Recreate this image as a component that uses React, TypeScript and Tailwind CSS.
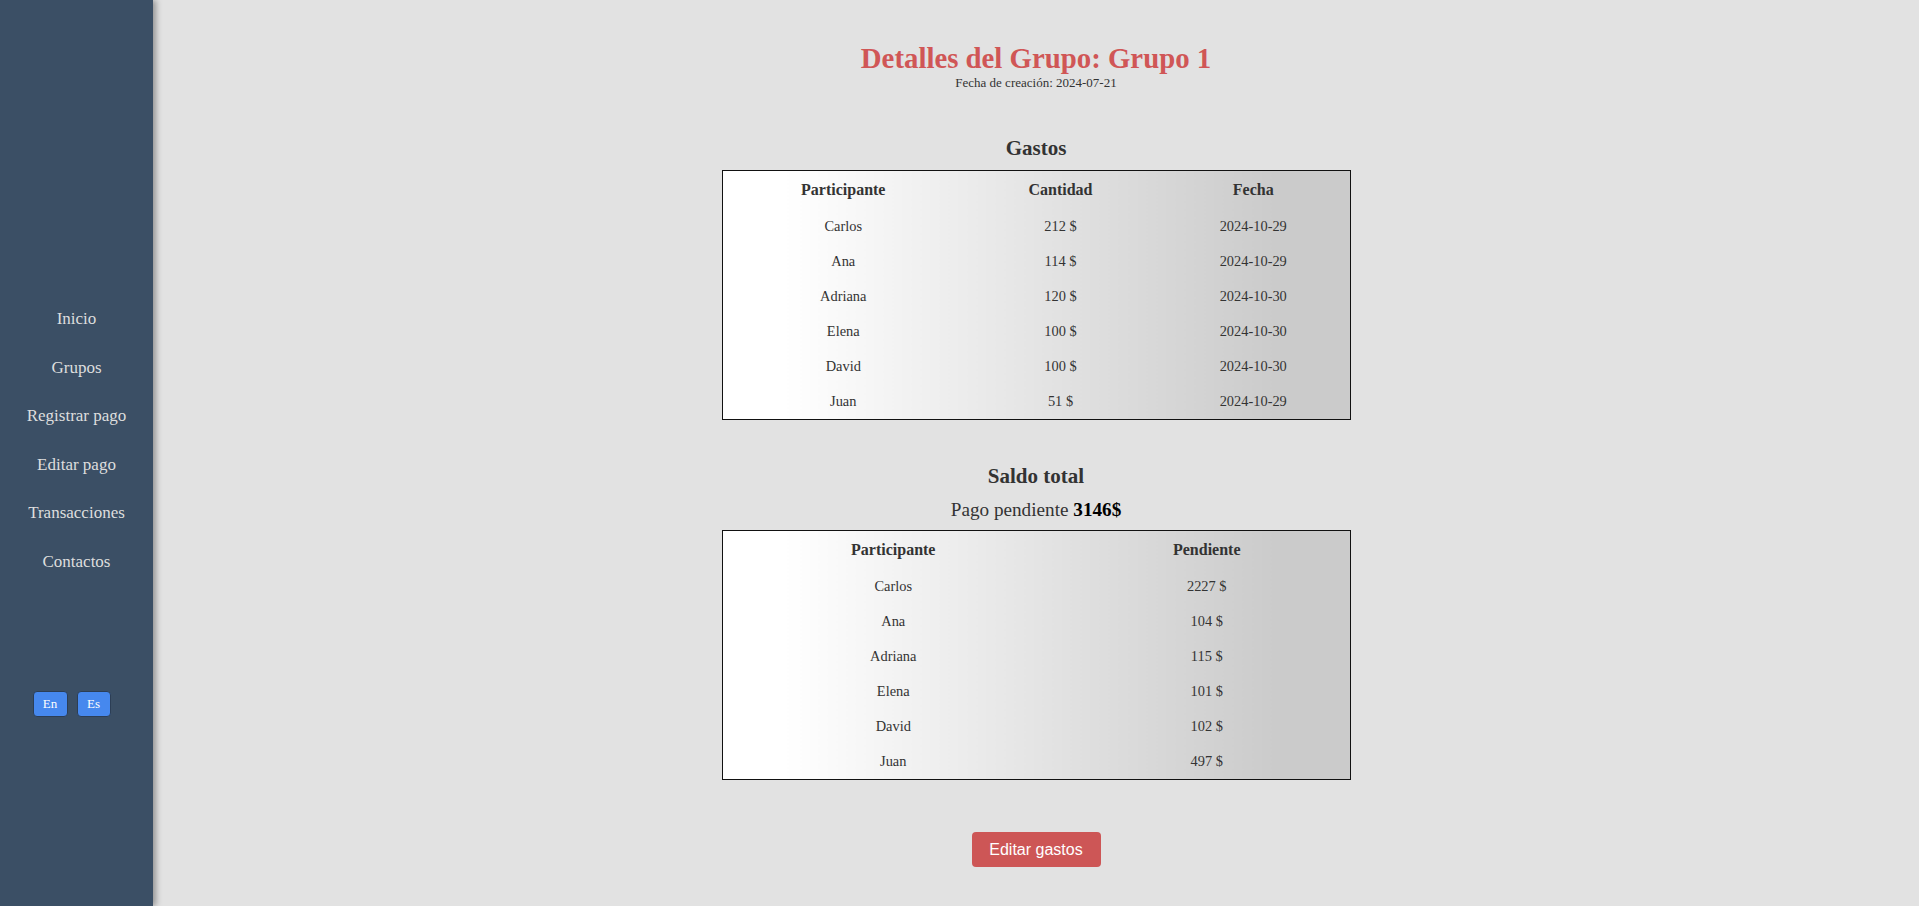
import React from "react";

const serif = { fontFamily: '"Liberation Serif", "Times New Roman", serif' };

const gastos = [
  ["Carlos", "212 $", "2024-10-29"],
  ["Ana", "114 $", "2024-10-29"],
  ["Adriana", "120 $", "2024-10-30"],
  ["Elena", "100 $", "2024-10-30"],
  ["David", "100 $", "2024-10-30"],
  ["Juan", "51 $", "2024-10-29"],
];

const saldos = [
  ["Carlos", "2227 $"],
  ["Ana", "104 $"],
  ["Adriana", "115 $"],
  ["Elena", "101 $"],
  ["David", "102 $"],
  ["Juan", "497 $"],
];

const nav = ["Inicio", "Grupos", "Registrar pago", "Editar pago", "Transacciones", "Contactos"];

export default function App() {
  return (
    <div className="flex h-[906px] w-full bg-[#e2e2e2] overflow-hidden" style={serif}>
      <aside className="relative z-10 w-[153px] shrink-0 h-full bg-[#3b4f65] shadow-[3px_0_6px_rgba(0,0,0,0.35)] flex flex-col items-center pt-[309px]">
        <nav className="flex flex-col items-center gap-[28.5px]">
          {nav.map((n) => (
            <a key={n} className="text-[17px] leading-[20px] text-[#dedede] cursor-pointer">
              {n}
            </a>
          ))}
        </nav>
        <div className="flex gap-[9px] mt-[119px] -ml-[10px]">
          <button className="w-[35px] h-[26px] rounded-[4px] bg-[#4688ee] border border-[#2c3e55] text-white text-[13px] leading-none">
            En
          </button>
          <button className="w-[34px] h-[26px] rounded-[4px] bg-[#4688ee] border border-[#2c3e55] text-white text-[13px] leading-none">
            Es
          </button>
        </div>
      </aside>
      <main className="flex-1 flex flex-col items-center pt-[43px]">
        <h1 className="text-[28.8px] leading-[30px] font-bold text-[#d05656]">Detalles del Grupo: Grupo 1</h1>
        <p className="mt-[2px] text-[13px] leading-[16px] text-[#333]">Fecha de creación: 2024-07-21</p>

        <h2 className="mt-[45px] text-[21px] leading-[24px] font-bold text-[#333]">Gastos</h2>
        <table className="mt-[10px] w-[629px] border border-[#111] border-collapse bg-gradient-to-r from-white from-[10%] to-[#cbcbcb] to-[88%] text-[#333]">
          <thead>
            <tr className="h-[39px]">
              <th className="w-[242px] text-[16px] font-bold text-center">Participante</th>
              <th className="w-[193px] text-[16px] font-bold text-center">Cantidad</th>
              <th className="w-[193px] text-[16px] font-bold text-center">Fecha</th>
            </tr>
          </thead>
          <tbody>
            {gastos.map((r) => (
              <tr key={r[0]} className="h-[35px]">
                {r.map((c, i) => (
                  <td key={i} className="text-[14.4px] text-center">
                    {c}
                  </td>
                ))}
              </tr>
            ))}
          </tbody>
        </table>

        <h2 className="mt-[44px] text-[21px] leading-[24px] font-bold text-[#333]">Saldo total</h2>
        <p className="mt-[10px] text-[19.2px] leading-[23px] text-[#333]">
          Pago pendiente <b className="text-black">3146$</b>
        </p>
        <table className="mt-[9px] w-[629px] border border-[#111] border-collapse bg-gradient-to-r from-white from-[10%] to-[#cbcbcb] to-[88%] text-[#333]">
          <thead>
            <tr className="h-[39px]">
              <th className="w-[342px] text-[16px] font-bold text-center">Participante</th>
              <th className="w-[286px] text-[16px] font-bold text-center">Pendiente</th>
            </tr>
          </thead>
          <tbody>
            {saldos.map((r) => (
              <tr key={r[0]} className="h-[35px]">
                {r.map((c, i) => (
                  <td key={i} className="text-[14.4px] text-center">
                    {c}
                  </td>
                ))}
              </tr>
            ))}
          </tbody>
        </table>

        <button
          className="mt-[52px] w-[129px] h-[35px] rounded-[4px] bg-[#cd5656] text-white text-[16px]"
          style={{ fontFamily: '"Liberation Sans", Arial, sans-serif' }}
        >
          Editar gastos
        </button>
      </main>
    </div>
  );
}
